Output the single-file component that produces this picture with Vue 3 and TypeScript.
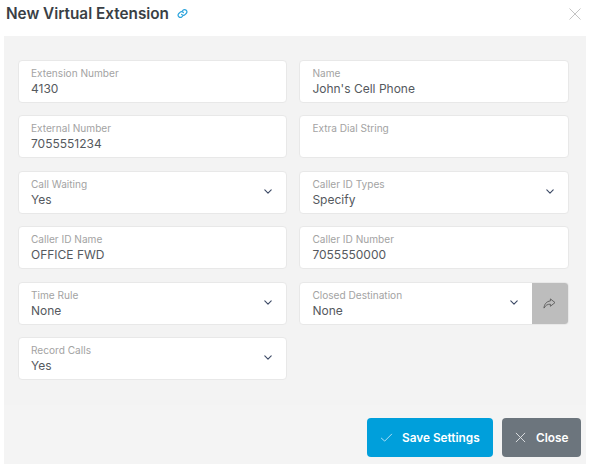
<script setup lang="ts">
interface Field {
  label: string;
  value: string;
  select?: boolean;
  action?: boolean;
}

const fields: Field[] = [
  { label: "Extension Number", value: "4130" },
  { label: "Name", value: "John's Cell Phone" },
  { label: "External Number", value: "7055551234" },
  { label: "Extra Dial String", value: "" },
  { label: "Call Waiting", value: "Yes", select: true },
  { label: "Caller ID Types", value: "Specify", select: true },
  { label: "Caller ID Name", value: "OFFICE FWD" },
  { label: "Caller ID Number", value: "7055550000" },
  { label: "Time Rule", value: "None", select: true },
  { label: "Closed Destination", value: "None", select: true, action: true },
  { label: "Record Calls", value: "Yes", select: true },
];
</script>

<template>
  <div class="modal">
    <header class="head">
      <h1 class="title">New Virtual Extension</h1>
      <svg class="link" viewBox="0 0 24 24" width="11" height="11" fill="none" stroke="#2aa3dc" stroke-width="2.6" stroke-linecap="round" stroke-linejoin="round">
        <path d="M10 14a5 5 0 0 0 7.5.5l3-3a5 5 0 0 0-7-7l-1.7 1.7" />
        <path d="M14 10a5 5 0 0 0-7.5-.5l-3 3a5 5 0 0 0 7 7l1.7-1.7" />
      </svg>
      <svg class="dismiss" viewBox="0 0 12 12" width="12" height="12" fill="none" stroke="#bdbdbd" stroke-width="0.9">
        <path d="M0.5 0.5 11.5 11.5M11.5 0.5 0.5 11.5" />
      </svg>
    </header>

    <main class="body">
      <div class="grid">
        <div v-for="f in fields" :key="f.label" class="field">
          <div class="text">
            <span class="label">{{ f.label }}</span>
            <span class="value">{{ f.value }}</span>
          </div>
          <svg v-if="f.select" class="chevron" viewBox="0 0 10 6" width="8" height="5" fill="none" stroke="#3d4a66" stroke-width="1.4" stroke-linecap="round" stroke-linejoin="round">
            <path d="M1 1 5 5 9 1" />
          </svg>
          <div v-if="f.action" class="action">
            <svg viewBox="0 0 14 12" width="13" height="11" fill="none" stroke="#5c5c5c" stroke-width="1" stroke-linejoin="round">
              <path d="M8 1 13 5 8 9V6.8C5 6.6 2.8 7.8 1 11 1.2 7 3.6 3.6 8 3.2Z" />
            </svg>
          </div>
        </div>
      </div>
    </main>

    <footer class="foot">
      <button class="btn save">
        <svg viewBox="0 0 14 10" width="13" height="9" fill="none" stroke="#bfe6f7" stroke-width="1">
          <path d="M1 5.5 5 9 13 1" />
        </svg>
        Save Settings
      </button>
      <button class="btn close">
        <svg viewBox="0 0 12 12" width="11" height="11" fill="none" stroke="#e3e5e7" stroke-width="1">
          <path d="M1 1 11 11M11 1 1 11" />
        </svg>
        Close
      </button>
    </footer>
  </div>
</template>

<style scoped>
.modal {
  width: 593px;
  height: 464px;
  background: #fff;
  font-family: Inter, "Liberation Sans", sans-serif;
  display: flex;
  flex-direction: column;
  overflow: hidden;
}
.head {
  height: 36px;
  flex: none;
  display: flex;
  align-items: center;
  padding: 0 12px 10px 6px;
  box-sizing: border-box;
  gap: 8px;
}
.title {
  margin: 0;
  font-size: 15.3px;
  font-weight: 600;
  color: #3a3f45;
}
.dismiss {
  margin-left: auto;
  margin-top: 2px;
}
.body {
  margin: 0 7px 0 4px;
  height: 369px;
  flex: none;
  box-sizing: border-box;
  background: #f3f3f3;
  padding: 24px 17px 0 14px;
}
.grid {
  display: grid;
  grid-template-columns: 269.4px 269.4px;
  column-gap: 12px;
  grid-auto-rows: 43px;
  row-gap: 12.4px;
}
.field {
  display: flex;
  align-items: center;
  background: #fff;
  border: 1px solid #e8e8e8;
  border-radius: 4px;
  box-sizing: border-box;
  overflow: hidden;
}
.text {
  flex: 1;
  display: flex;
  flex-direction: column;
  padding-left: 12px;
  min-width: 0;
  align-self: flex-start;
  padding-top: 6px;
}
.label {
  font-size: 10.1px;
  line-height: 13px;
  color: #a3a3a3;
}
.value {
  font-size: 12px;
  line-height: 17px;
  color: #55595e;
  min-height: 17px;
}
.chevron {
  margin-right: 14px;
  margin-top: -1px;
  flex: none;
}
.action {
  flex: none;
  width: 36px;
  align-self: stretch;
  margin-left: 1px;
  background: #bdbdbd;
  display: flex;
  align-items: center;
  justify-content: center;
}
.field:has(.action) .chevron {
  margin-right: 13px;
}
.foot {
  flex: 1;
  margin: 0 7px 0 4px;
  background: #f4f4f4;
  display: flex;
  justify-content: flex-end;
  align-items: flex-start;
  gap: 9px;
  padding: 13px 5px 0 0;
}
.btn {
  height: 39px;
  border: none;
  border-radius: 4px;
  color: #fff;
  font-family: inherit;
  font-size: 11.8px;
  font-weight: 600;
  display: flex;
  align-items: center;
  box-sizing: border-box;
  white-space: nowrap;
}
.save {
  width: 126px;
  background: #009fdb;
  padding: 0 0 0 13px;
  gap: 9px;
}
.close {
  width: 79px;
  background: #6c757d;
  padding: 0 0 0 13px;
  gap: 10px;
}
</style>
